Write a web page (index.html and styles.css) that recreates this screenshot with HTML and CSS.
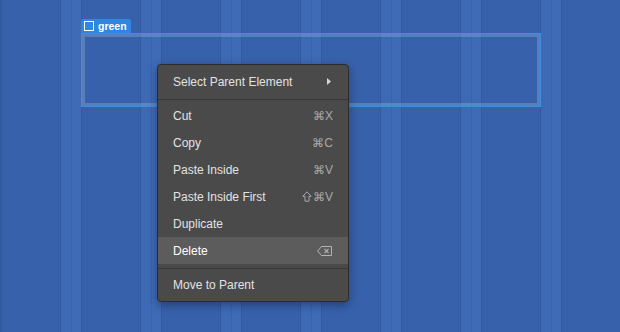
FILE: index.html
```html
<!DOCTYPE html>
<html lang="en">
<head>
  <meta charset="UTF-8">
  <title>Context Menu</title>
  <link rel="stylesheet" href="styles.css">
</head>
<body>
  <div class="canvas">
    <div class="selection">
      <div class="tag"><span class="tag-box"></span>green</div>
    </div>

    <ul class="menu">
      <li class="item">
        <span class="label">Select Parent Element</span>
        <svg class="arrow" width="4" height="7" viewBox="0 0 4 7"><polygon points="0,0 4,3.5 0,7" fill="#d6d6d6"/></svg>
      </li>
      <li class="sep"></li>
      <li class="item"><span class="label">Cut</span><span class="key">⌘X</span></li>
      <li class="item"><span class="label">Copy</span><span class="key">⌘C</span></li>
      <li class="item"><span class="label">Paste Inside</span><span class="key">⌘V</span></li>
      <li class="item">
        <span class="label">Paste Inside First</span>
        <span class="key">
          <svg class="shift" width="10" height="11" viewBox="0 0 10 11"><path d="M5 0.8 L9.2 5.3 H7 V10.2 H3 V5.3 H0.8 Z" fill="none" stroke="#a9a9a9" stroke-width="1"/></svg>⌘V
        </span>
      </li>
      <li class="item"><span class="label">Duplicate</span></li>
      <li class="item active">
        <span class="label">Delete</span>
        <svg class="backspace" width="15" height="10" viewBox="0 0 15 10"><path d="M4.5 0.5 H14.5 V9.5 H4.5 L0.6 5 Z" fill="none" stroke="#b4b4b4"/><path d="M7.5 2.8 L11.5 7.2 M11.5 2.8 L7.5 7.2" stroke="#b4b4b4" stroke-width="1.2"/></svg>
      </li>
      <li class="sep"></li>
      <li class="item"><span class="label">Move to Parent</span></li>
    </ul>
  </div>
</body>
</html>
```

FILE: styles.css
```css
* {
  margin: 0;
  padding: 0;
  box-sizing: border-box;
}

body {
  width: 620px;
  height: 332px;
  overflow: hidden;
  font-family: 'Liberation Sans', Arial, sans-serif;
  background-color: #3761ab;
  background-image: repeating-linear-gradient(90deg,
    #33599e 0, #33599e 1px,
    #3761ab 1px, #3761ab 59px,
    #33599e 59px, #33599e 60px,
    #3e69b5 60px, #3e69b5 70px,
    #3963ae 70px, #3963ae 71px,
    #3e6ab6 71px, #3e6ab6 80px);
  background-position: 1px 0;
}

.canvas {
  position: relative;
  height: 100%;
  padding: 33px 0 0 81px;
}

/* selected element outline */
.selection {
  position: relative;
  width: 460px;
  height: 74px;
  border: 1px solid #3f8de2;
}

.selection::before {
  content: '';
  position: absolute;
  inset: 0;
  border: 3px solid rgba(190, 200, 220, 0.28);
}

.tag {
  position: absolute;
  left: -1px;
  top: -15px;
  height: 14px;
  display: flex;
  align-items: center;
  gap: 4px;
  padding: 0 4px 0 3px;
  background-color: #2f86e3;
  color: #fff;
  font-size: 10.5px;
  font-weight: bold;
  border-radius: 2px 2px 0 0;
}

.tag-box {
  width: 10px;
  height: 10px;
  border: 1px solid #fff;
}

/* context menu */
.menu {
  position: absolute;
  left: 157px;
  top: 64px;
  width: 192px;
  list-style: none;
  padding: 3px 0 3px;
  background-color: #4a4a4a;
  border: 1px solid #2c2c2c;
  border-radius: 4px;
  box-shadow: 0 3px 10px rgba(0, 0, 0, 0.35);
}

.item {
  height: 27px;
  display: flex;
  align-items: center;
  justify-content: space-between;
  padding: 0 15px 0 15px;
  font-size: 12px;
  color: #e2e2e2;
}

.item.active {
  background-color: #5c5c5c;
  color: #fff;
}

.sep {
  height: 1px;
  margin: 4px 0 2px;
  background-color: #383838;
}

.key {
  display: flex;
  align-items: center;
  gap: 1px;
  color: #a9a9a9;
  font-size: 12px;
}

.arrow {
  margin-right: 2px;
}

.backspace {
  margin-right: 1px;
}
```
